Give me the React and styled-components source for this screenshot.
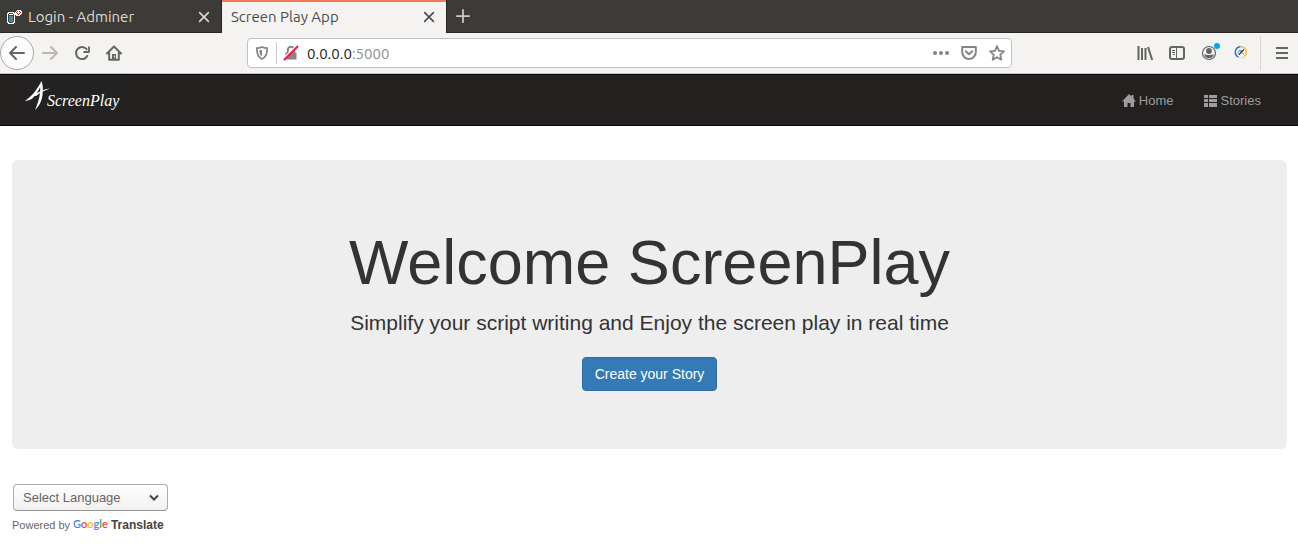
import React from "react";
import styled, { createGlobalStyle } from "styled-components";

const GlobalStyle = createGlobalStyle`
  *, *::before, *::after { box-sizing: border-box; }
  body {
    margin: 0;
    background: #fff;
    color: #333;
    font-family: "Liberation Sans", Arial, sans-serif;
    font-size: 14px;
  }
  button, input, select { font: inherit; }
  svg { display: block; flex: none; }
`;

const chromeFont = `Ubuntu, "Noto Sans", sans-serif`;

/* ---------- browser frame ---------- */

const TabStrip = styled.div`
  display: flex;
  height: 33px;
  background: #3c3b37;
  font-family: ${chromeFont};
  font-size: 15px;
`;

const Tab = styled.div`
  display: flex;
  align-items: center;
  width: ${(p) => (p.$active ? 224 : 222)}px;
  padding: ${(p) => (p.$active ? "0 10px 2px 9px" : "2px 10px 0 6px")};
  border-top: ${(p) => (p.$active ? "2px solid #f37b54" : "0")};
  border-bottom: ${(p) => (p.$active ? "0" : "1px solid #262522")};
  border-right: ${(p) => (p.$active ? "0" : "1px solid #262522")};
  background: ${(p) => (p.$active ? "#f4f3f2" : "transparent")};
  color: ${(p) => (p.$active ? "#4c4c4c" : "#dfdbd2")};
`;

const TabTitle = styled.span`
  flex: 1;
  margin-left: ${(p) => (p.$icon ? 6 : 0)}px;
  line-height: 20px;
  white-space: nowrap;
`;

const PlainButton = styled.button`
  display: flex;
  align-items: center;
  justify-content: center;
  padding: 0;
  border: 0;
  background: none;
  color: inherit;
`;

const StripEnd = styled.div`
  display: flex;
  flex: 1;
  padding: 0 9px;
  border-bottom: 1px solid #262522;
  border-left: 1px solid #262522;
  color: #cfcbc3;
`;

const Toolbar = styled.div`
  display: flex;
  align-items: center;
  height: 41px;
  background: #f4f3f2;
  border-bottom: 1px solid #c8c6c3;
  color: #656563;
`;

const ToolButton = styled(PlainButton)`
  position: relative;
  width: 32px;
  height: 34px;
  color: ${(p) => (p.$faded ? "#b9b8b6" : "inherit")};
`;

const BackButton = styled(PlainButton)`
  width: 34px;
  height: 34px;
  border: 1px solid #a9a8a6;
  border-radius: 50%;
  background: #fcfcfc;
`;

const AddressBar = styled.form`
  display: flex;
  align-items: center;
  flex: 1;
  height: 30px;
  margin: 0 117px;
  padding: 0 0 0 5px;
  border: 1px solid #c3c1be;
  border-radius: 4px;
  background: #fff;
  color: #858583;
  font-family: ${chromeFont};
  font-size: 15px;
`;

const AddressIcon = styled(PlainButton)`
  width: 28px;
  height: 22px;
  &:first-child { width: 18px; margin-right: 5px; }
`;

const AddressRule = styled.span`
  width: 1px;
  height: 22px;
  background: #c8c8c6;
`;

const AddressText = styled.a`
  flex: 1;
  margin-left: 2px;
  padding-top: 2px;
  color: #8f8f8f;
  text-decoration: none;
  line-height: 20px;
  strong { color: #222; font-weight: 400; }
`;

const ToolRule = styled.span`
  width: 1px;
  height: 34px;
  margin: 0 5px 0 3px;
  background: #d8d7d5;
`;

const Dot = styled.span`
  position: absolute;
  top: 7px;
  right: 5px;
  width: 6px;
  height: 6px;
  border-radius: 50%;
  background: #00a8f5;
`;

/* ---------- site ---------- */

const NavBar = styled.nav`
  display: flex;
  align-items: center;
  justify-content: space-between;
  height: 52px;
  padding: 0 22px 0 23px;
  border: solid #080808;
  border-width: 1px 0;
  background: #242020;
`;

const Brand = styled.a`
  display: flex;
  align-self: flex-start;
  align-items: flex-start;
  width: 100px;
  height: 40px;
  padding: 6px 2px;
  background: #222;
  color: #fff;
  font-family: "Liberation Serif", "Times New Roman", serif;
  font-size: 16px;
  font-style: italic;
  line-height: 20px;
  text-decoration: none;
  span { margin: 10px 0 0 -3px; }
`;

const NavLinks = styled.div`
  display: flex;
  padding-top: 2px;
`;

const NavLink = styled.a`
  display: flex;
  align-items: center;
  gap: 3px;
  padding: 0 15px;
  color: #9d9d9d;
  font-size: 13px;
  line-height: 20px;
  text-decoration: none;
`;

const Page = styled.main`
  padding: 34px 11px 12px 12px;
`;

const Jumbotron = styled.section`
  display: flex;
  flex-direction: column;
  align-items: center;
  padding: 68px 60px 58px;
  border-radius: 6px;
  background: #eee;
  text-align: center;
`;

const Title = styled.h1`
  margin: 0;
  font-size: 63px;
  font-weight: 400;
  line-height: 69px;
`;

const Lead = styled.p`
  margin: 11px 0 19px;
  font-size: 21px;
  line-height: 30px;
`;

const PrimaryButton = styled.button`
  height: 34px;
  padding: 0 12px;
  border: 1px solid #2e6da4;
  border-radius: 4px;
  background: #337ab7;
  color: #fff;
  font-size: 14px;
  line-height: 20px;
`;

const Translate = styled.div`
  display: flex;
  flex-direction: column;
  align-items: flex-start;
  margin-top: 35px;
`;

const SelectWrap = styled.div`
  position: relative;
  margin-left: 1px;
  color: #444;
  svg {
    position: absolute;
    top: 10px;
    right: 9px;
    pointer-events: none;
  }
`;

const LanguageSelect = styled.select`
  display: block;
  appearance: none;
  width: 155px;
  height: 27px;
  padding: 0 9px;
  border: 1px solid #adadad;
  border-bottom-color: #969696;
  border-radius: 4px;
  background: linear-gradient(#fff, #f1f0ef);
  color: #666;
  font-size: 13px;
`;

const Powered = styled.div`
  display: flex;
  align-items: center;
  margin-top: 4px;
  color: #666;
  font-size: 11px;
  line-height: 20px;
`;

const GoogleLink = styled.a`
  display: flex;
  align-items: center;
  gap: 3px;
  margin-left: 3px;
  color: #444;
  font-size: 12px;
  font-weight: 700;
  text-decoration: none;
`;

const GoogleMark = styled.span`
  font-family: Lato, sans-serif;
  font-size: 11px;
  font-weight: 600;
  line-height: 16px;
  margin-bottom: 3px;
`;

const Letter = styled.span`
  color: ${(p) => p.$color};
`;

/* ---------- icons ---------- */

const Icon = ({ size = 16, w = 2, children }) => (
  <svg width={size} height={size} viewBox="0 0 16 16" fill="none" stroke="currentColor"
    strokeWidth={w} strokeLinecap="round" strokeLinejoin="round" aria-hidden="true">
    {children}
  </svg>
);

const AdminerIcon = () => (
  <svg width="16" height="16" viewBox="0 0 16 16" fill="none" aria-hidden="true">
    <path d="M2 3h6v1h1v10h-1v1H2v-1H1V4h1z" fill="#fff" />
    <path d="M3 4.500h4M3 6.500h4M2.500 5v8M7.500 5v8M3 13.500h4" stroke="#12506c" />
    <path d="M3 7h4v6H3z" fill="#6d7b80" />
    <path d="M10 2h1V1h4v1h1v3h-1v1h-1v1h-4V6H9V3h1z" fill="#fff" />
    <path d="M10 3.500h1M11 2.500h1M13 2.500h1M14 3.500h1M11 4.500h1M13 4.500h1M12 5.500h1" stroke="#e01919" />
  </svg>
);

const CloseIcon = () => (
  <Icon size={14} w={1.8}><path d="M3 3l10 10M13 3L3 13" /></Icon>
);

const GOOGLE = [["G", "#4285f4"], ["o", "#ea4335"], ["o", "#fbbc05"], ["g", "#4285f4"], ["l", "#34a853"], ["e", "#ea4335"]];

export default function App() {
  return (
    <>
      <GlobalStyle />
      <header>
        <TabStrip>
          <Tab>
            <AdminerIcon />
            <TabTitle $icon>Login - Adminer</TabTitle>
            <PlainButton aria-label="Close Login - Adminer"><CloseIcon /></PlainButton>
          </Tab>
          <Tab $active>
            <TabTitle>Screen Play App</TabTitle>
            <PlainButton aria-label="Close Screen Play App"><CloseIcon /></PlainButton>
          </Tab>
          <StripEnd>
            <PlainButton aria-label="New tab">
              <Icon size={14}><path d="M8 1v14M1 8h14" /></Icon>
            </PlainButton>
          </StripEnd>
        </TabStrip>

        <Toolbar>
          <BackButton aria-label="Back">
            <Icon><path d="M15 8H1.500M7 2L1 8l6 6" /></Icon>
          </BackButton>
          <ToolButton $faded aria-label="Forward">
            <Icon><path d="M1 8h13.500M9 2l6 6-6 6" /></Icon>
          </ToolButton>
          <ToolButton aria-label="Reload">
            <Icon>
              <path d="M13.300 11A6 6 0 1 1 12.600 4.200" />
              <path d="M15 1.500V7H9.500" strokeWidth="1.800" strokeLinecap="butt" />
            </Icon>
          </ToolButton>
          <ToolButton aria-label="Home page">
            <Icon>
              <path d="M1 8.500L8 1.500l7 7M3.200 8v6.800h9.600V8" />
              <path d="M6 9h4v5H6z" fill="currentColor" stroke="none" />
              <path d="M8.500 11v1" stroke="#f4f3f2" strokeWidth="1" />
            </Icon>
          </ToolButton>

          <AddressBar onSubmit={(e) => e.preventDefault()}>
            <AddressIcon type="button" aria-label="Tracking protection">
              <Icon size={14}>
                <path d="M8 1.200c2 1 4 1.300 6 1.300 0 6-1 10-6 12.300C3 12.500 2 8.500 2 2.500c2 0 4-.3 6-1.300z" />
                <path d="M8 4.200L5 5c.1 3.500.9 5.500 3 6.800z" fill="currentColor" stroke="none" />
              </Icon>
            </AddressIcon>
            <AddressRule />
            <AddressIcon type="button" aria-label="Connection not secure">
              <Icon>
                <path d="M2.500 7.500h11v7h-11z" fill="currentColor" stroke="none" />
                <path d="M4.800 8V5a3.200 3.200 0 0 1 6.400 0v3" />
                <path d="M1 13.500L14 .5" stroke="#fff" strokeWidth="2" strokeLinecap="butt" />
                <path d="M1.500 14.500L14.500 1.500" stroke="#f0194b" />
              </Icon>
            </AddressIcon>
            <AddressText href="#"><strong>0.0.0.0</strong>:5000</AddressText>
            <AddressIcon type="button" aria-label="Page actions">
              <Icon>
                <g fill="currentColor" stroke="none">
                  <circle cx="2" cy="8" r="2" /><circle cx="8" cy="8" r="2" /><circle cx="14" cy="8" r="2" />
                </g>
              </Icon>
            </AddressIcon>
            <AddressIcon type="button" aria-label="Save to Pocket">
              <Icon>
                <path d="M1.200 2h13.600v5.200a6.800 6.800 0 0 1-13.600 0z" />
                <path d="M4.800 6.300L8 9.300l3.200-3" />
              </Icon>
            </AddressIcon>
            <AddressIcon type="button" aria-label="Bookmark">
              <Icon w={1.8}>
                <path d="M8 1.200l2 4.600 5 .5-3.700 3.400 1 5L8 12.200l-4.300 2.500 1-5L1 6.300l5-.5z" />
              </Icon>
            </AddressIcon>
          </AddressBar>

          <ToolButton aria-label="Library">
            <Icon><path d="M1.500 1v14M5 3v12M8.500 3v12M11 2l4.200 13" strokeLinecap="butt" /></Icon>
          </ToolButton>
          <ToolButton aria-label="Sidebars">
            <Icon>
              <rect x="1" y="2" width="14" height="12" rx="2" />
              <path d="M7.500 2v12" strokeWidth="1" />
              <path d="M3 5.500h3M3 7.500h3M4 9.500h2" strokeWidth="1" strokeLinecap="butt" />
            </Icon>
          </ToolButton>
          <ToolButton aria-label="Account">
            <Icon w={1.2}>
              <circle cx="8" cy="8" r="6.500" />
              <circle cx="8" cy="6" r="2.900" fill="currentColor" stroke="none" />
              <path d="M3.300 9.200c1.500 0 2.200.8 4.700.8s3.200-.8 4.700-.8c0 2-2 4-4.700 4s-4.700-2-4.700-4z" fill="currentColor" stroke="none" />
            </Icon>
            <Dot />
          </ToolButton>
          <ToolButton aria-label="Extension">
            <Icon w={1.5}>
              <path d="M7 1.800A5.400 5.400 0 0 0 5 11.800" stroke="#3b6fd4" />
              <path d="M8.500 1.800a5.400 5.400 0 0 1 3.200 9.200" stroke="#fbc033" />
              <path d="M6.500 12.500c2 .4 3.500 0 4.500-.7l.8 2" stroke="#c9dff0" strokeWidth="1" />
              <path d="M5.300 8.500c-.3-3 2.500-4 3.700-3" stroke="#35a9e8" strokeWidth="1" />
              <path d="M6.500 5.500l4 3.500" stroke="#777" strokeWidth="0.900" />
              <path d="M10.500 4.800L6.300 9.300" stroke="#222" strokeWidth="1.200" />
            </Icon>
          </ToolButton>
          <ToolRule />
          <ToolButton aria-label="Menu">
            <Icon><path d="M2 3h12M2 8h12M2 13h12" strokeLinecap="butt" /></Icon>
          </ToolButton>
        </Toolbar>
      </header>

      <NavBar>
        <Brand href="#">
          <svg width="25" height="30" viewBox="0 0 25 30" fill="#fff" aria-hidden="true">
            <path d="M0 20C6 16 12 9 16.500 0c1.500 4 1.700 9 1 14-1 6-2.500 10-7.500 15 2.500-6 4.300-11 5-17 .2-2 .2-4 .2-6C11 14 8 19.500 0 20z" />
            <path d="M8 14.500C13 11 19 8 25 7.500c-5 1.700-9.500 4-14 7.500z" />
          </svg>
          <span>ScreenPlay</span>
        </Brand>
        <NavLinks>
          <NavLink href="#">
            <svg width="14" height="14" viewBox="0 0 14 14" fill="currentColor" aria-hidden="true">
              <path d="M7 0l2.500 2.500V1h2v3.500L14 7.500h-2V13H8.500V9h-3v4H2V7.500H0z" />
            </svg>
            Home
          </NavLink>
          <NavLink href="#">
            <svg width="14" height="14" viewBox="0 0 14 14" fill="currentColor" aria-hidden="true">
              <path d="M0 1h4v3H0zM5 1h8v3H5zM0 5h4v3H0zM5 5h8v3H5zM0 9h4v4H0zM5 9h8v4H5z" />
            </svg>
            Stories
          </NavLink>
        </NavLinks>
      </NavBar>

      <Page>
        <Jumbotron>
          <Title>Welcome ScreenPlay</Title>
          <Lead>Simplify your script writing and Enjoy the screen play in real time</Lead>
          <PrimaryButton>Create your Story</PrimaryButton>
        </Jumbotron>
        <Translate>
          <SelectWrap>
            <LanguageSelect aria-label="Language" defaultValue="">
              <option value="">Select Language</option>
            </LanguageSelect>
            <svg width="10" height="8" viewBox="0 0 10 8" fill="none" stroke="currentColor" strokeWidth="2" aria-hidden="true">
              <path d="M1 1.500l4 4 4-4" />
            </svg>
          </SelectWrap>
          <Powered>
            Powered by
            <GoogleLink href="#">
              <GoogleMark>
                {GOOGLE.map(([ch, color], i) => <Letter key={i} $color={color}>{ch}</Letter>)}
              </GoogleMark>
              Translate
            </GoogleLink>
          </Powered>
        </Translate>
      </Page>
    </>
  );
}
